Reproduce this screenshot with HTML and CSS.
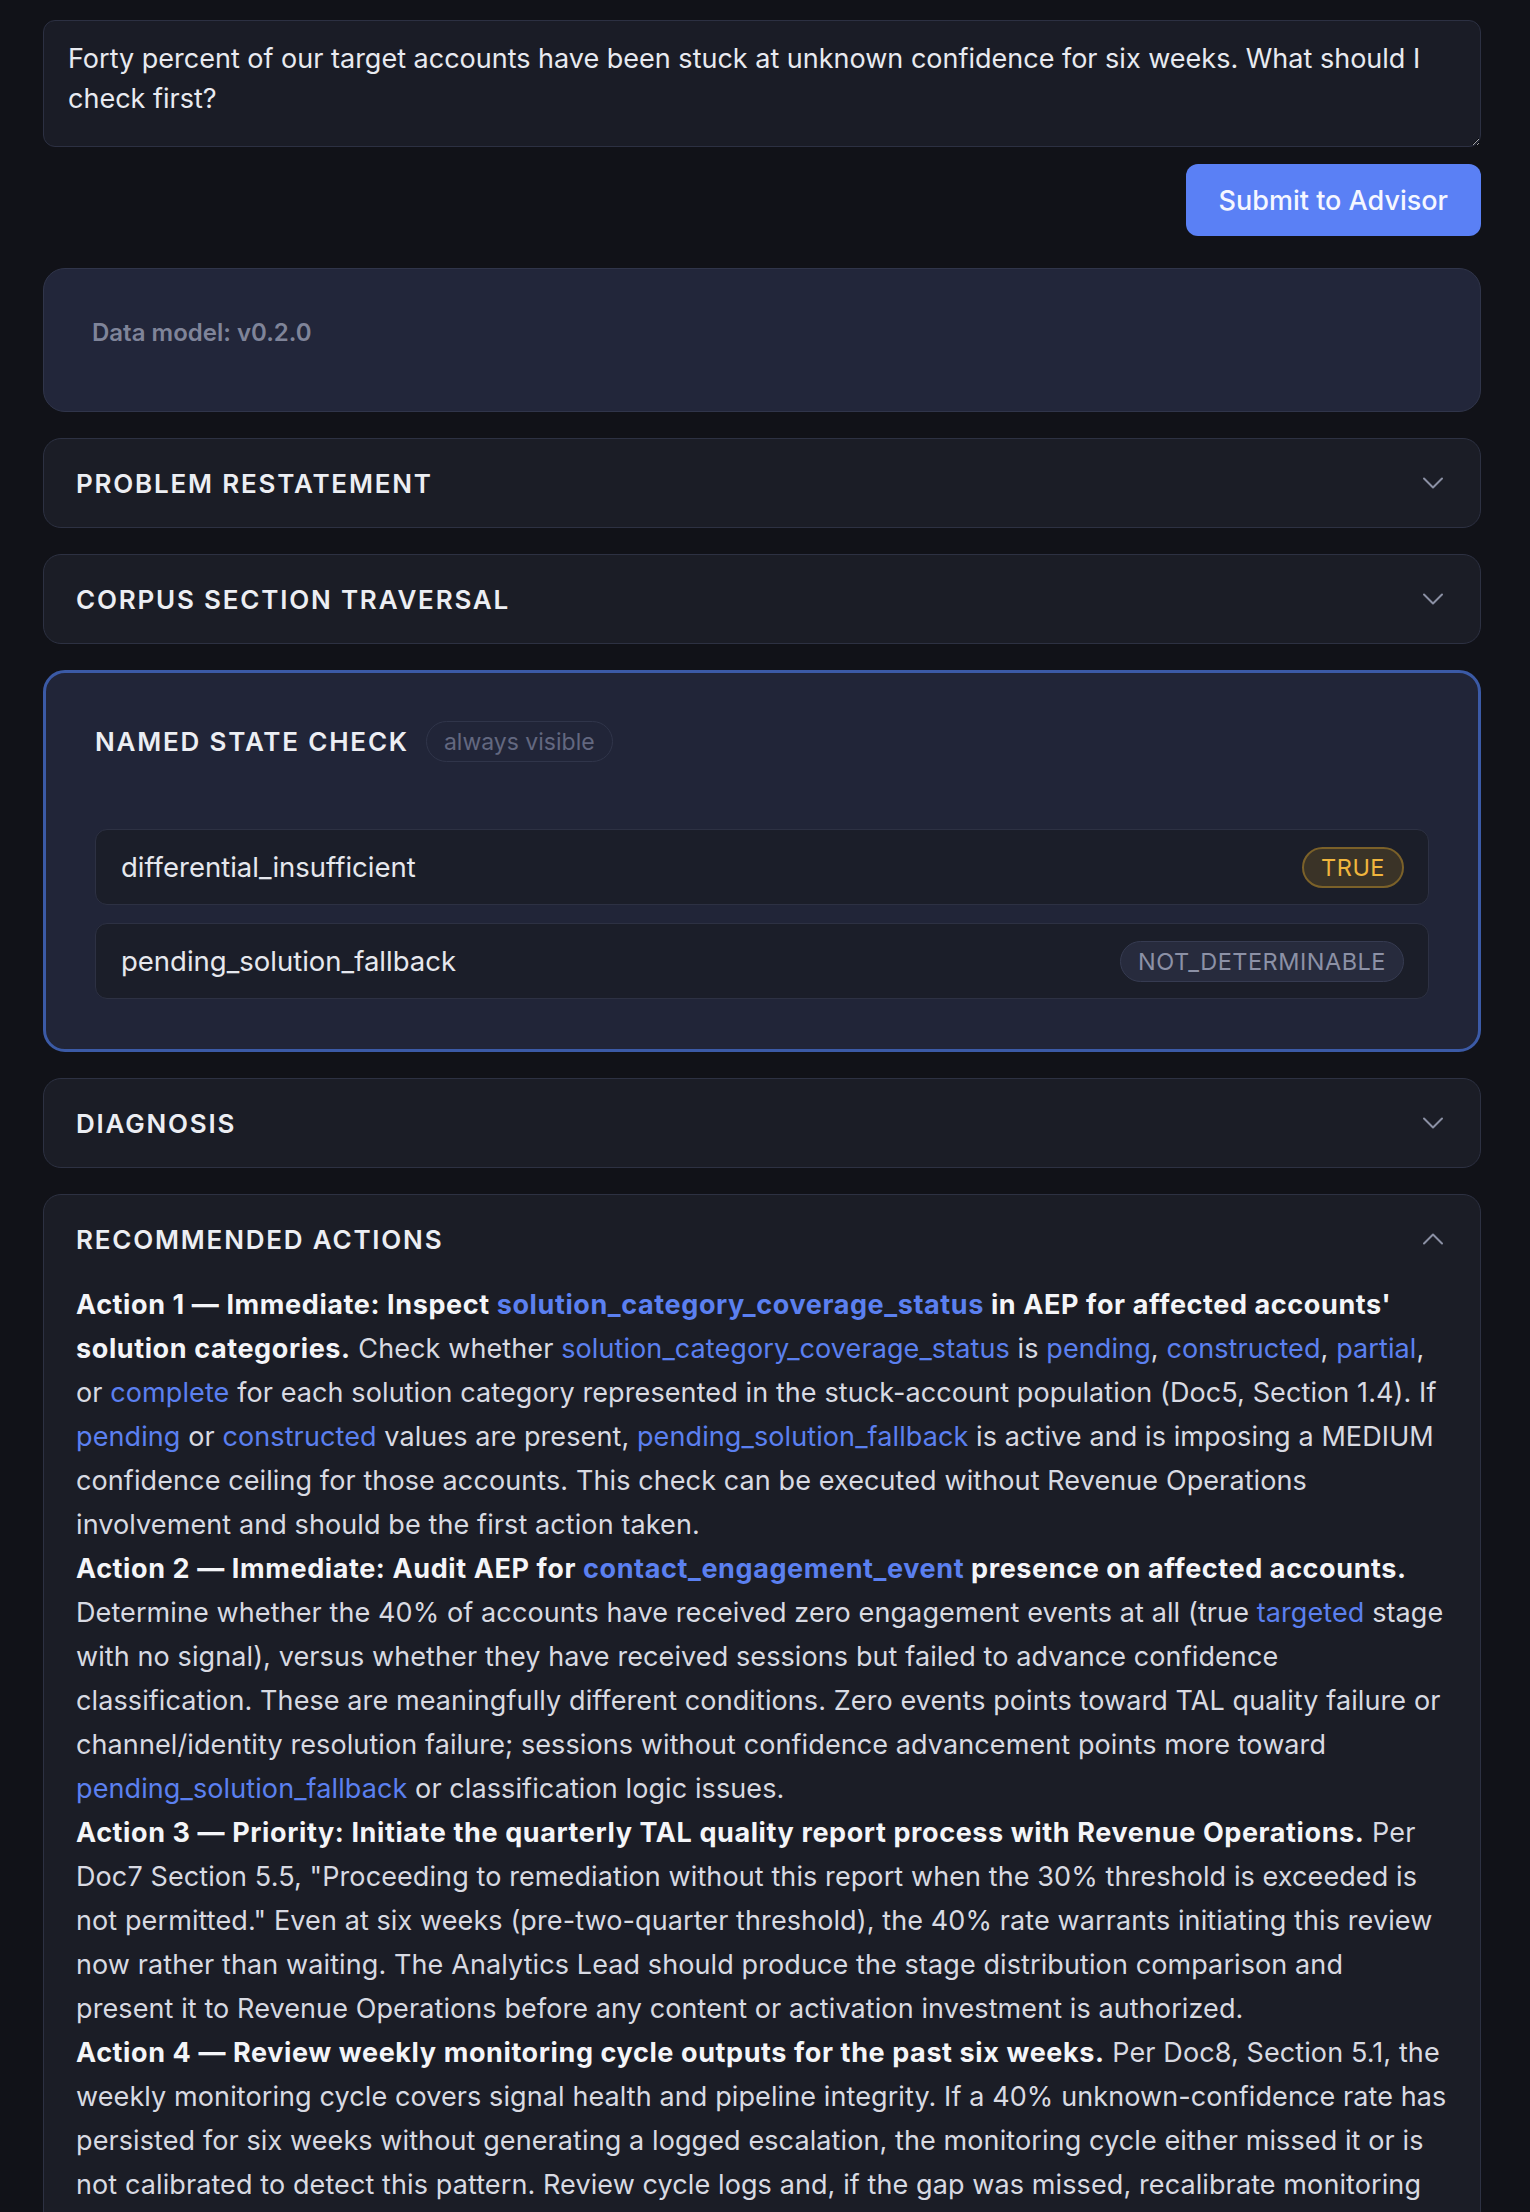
FILE: index.html
```html
<!DOCTYPE html>
<html lang="en">
<head>
  <meta charset="UTF-8">
  <title>Advisor</title>
  <link rel="stylesheet" href="styles.css">
</head>
<body>

<div class="page">
  <textarea class="question">Forty percent of our target accounts have been stuck at unknown confidence for six weeks. What should I check first?</textarea>
  <div class="submit-row">
    <button class="submit">Submit to Advisor</button>
  </div>

  <div class="results">
    <div class="meta-card">
      <div class="meta">Data model: v0.2.0</div>
    </div>

    <div class="section">
      <div class="section-head">
        <span class="section-title">Problem Restatement</span>
        <svg class="chev" width="24" height="24" viewBox="0 0 24 24"><path d="M3 7.5L12 16.5L21 7.5"/></svg>
      </div>
    </div>

    <div class="section">
      <div class="section-head">
        <span class="section-title">Corpus Section Traversal</span>
        <svg class="chev" width="24" height="24" viewBox="0 0 24 24"><path d="M3 7.5L12 16.5L21 7.5"/></svg>
      </div>
    </div>

    <div class="state-card">
      <div class="state-head">
        <span class="section-title">Named State Check</span>
        <span class="pill">always visible</span>
      </div>
      <div class="state-list">
        <div class="state-row">
          <span>differential_insufficient</span>
          <span class="flag flag-true">TRUE</span>
        </div>
        <div class="state-row">
          <span>pending_solution_fallback</span>
          <span class="flag flag-na">NOT_DETERMINABLE</span>
        </div>
      </div>
    </div>

    <div class="section">
      <div class="section-head">
        <span class="section-title">Diagnosis</span>
        <svg class="chev" width="24" height="24" viewBox="0 0 24 24"><path d="M3 7.5L12 16.5L21 7.5"/></svg>
      </div>
    </div>

    <div class="section">
      <div class="section-head">
        <span class="section-title">Recommended Actions</span>
        <svg class="chev" width="24" height="24" viewBox="0 0 24 24"><path d="M3 16.5L12 7.5L21 16.5"/></svg>
      </div>
      <div class="section-body">
        <p><strong>Action 1 — Immediate: Inspect <span class="ref">solution_category_coverage_status</span> in AEP for affected accounts' solution categories.</strong> Check whether <span class="ref">solution_category_coverage_status</span> is <span class="ref">pending</span>, <span class="ref">constructed</span>, <span class="ref">partial</span>, or <span class="ref">complete</span> for each solution category represented in the stuck-account population (Doc5, Section 1.4). If <span class="ref">pending</span> or <span class="ref">constructed</span> values are present, <span class="ref">pending_solution_fallback</span> is active and is imposing a MEDIUM confidence ceiling for those accounts. This check can be executed without Revenue Operations involvement and should be the first action taken.</p>
        <p><strong>Action 2 — Immediate: Audit AEP for <span class="ref">contact_engagement_event</span> presence on affected accounts.</strong> Determine whether the 40% of accounts have received zero engagement events at all (true <span class="ref">targeted</span> stage with no signal), versus whether they have received sessions but failed to advance confidence classification. These are meaningfully different conditions. Zero events points toward TAL quality failure or channel/identity resolution failure; sessions without confidence advancement points more toward <span class="ref">pending_solution_fallback</span> or classification logic issues.</p>
        <p><strong>Action 3 — Priority: Initiate the quarterly TAL quality report process with Revenue Operations.</strong> Per Doc7 Section 5.5, "Proceeding to remediation without this report when the 30% threshold is exceeded is not permitted." Even at six weeks (pre-two-quarter threshold), the 40% rate warrants initiating this review now rather than waiting. The Analytics Lead should produce the stage distribution comparison and present it to Revenue Operations before any content or activation investment is authorized.</p>
        <p><strong>Action 4 — Review weekly monitoring cycle outputs for the past six weeks.</strong> Per Doc8, Section 5.1, the weekly monitoring cycle covers signal health and pipeline integrity. If a 40% unknown-confidence rate has persisted for six weeks without generating a logged escalation, the monitoring cycle either missed it or is not calibrated to detect this pattern. Review cycle logs and, if the gap was missed, recalibrate monitoring thresholds before the next cycle.</p>
      </div>
    </div>
  </div>
</div>

</body>
</html>
```

FILE: styles.css
```css
body {
  margin: 0;
  background: #111218;
  font-family: Inter, "Noto Sans", sans-serif;
  color: #e4e6ec;
}
.page {
  padding: 20px 49px 40px 43px;
}
.question {
  display: block;
  width: 100%;
  height: 127px;
  box-sizing: border-box;
  padding: 18px 24px;
  background: #1a1c26;
  border: 1.5px solid #2c3042;
  border-radius: 12px;
  color: #e8eaf0;
  font-family: Inter, "Noto Sans", sans-serif;
  font-size: 27px;
  line-height: 40px;
  resize: vertical;
  outline: none;
}
.submit-row {
  display: flex;
  justify-content: flex-end;
  margin-top: 17px;
}
.submit {
  height: 72px;
  padding: 0 33px;
  background: #5a80f5;
  color: #f5f7ff;
  border: none;
  border-radius: 12px;
  font-family: Inter, "Noto Sans", sans-serif;
  font-size: 27px;
  font-weight: 500;
  cursor: pointer;
}
.results {
  display: flex;
  flex-direction: column;
  gap: 26px;
  margin-top: 32px;
}
.meta-card {
  background: #22263a;
  border: 1.5px solid #30354a;
  border-radius: 22px;
  padding: 48px 48px 62px;
}
.meta {
  font-size: 24px;
  font-weight: 600;
  line-height: 32px;
  color: #7f8499;
}
.section {
  background: #1b1d26;
  border: 1.5px solid #2d3142;
  border-radius: 18px;
}
.section-head {
  height: 88px;
  display: flex;
  align-items: center;
  justify-content: space-between;
  padding: 0 35px 0 32px;
}
.section-title {
  font-size: 26px;
  font-weight: 600;
  letter-spacing: 1.8px;
  text-transform: uppercase;
  color: #eceef3;
}
.chev {
  fill: none;
  stroke: #8b90a4;
  stroke-width: 2;
  stroke-linecap: round;
  stroke-linejoin: round;
}
.section-body {
  padding: 0 33px 30px 32px;
  font-size: 27px;
  line-height: 44px;
  letter-spacing: 0.1px;
  color: #d8dae2;
}
.section-body p {
  margin: 0;
}
.section-body strong {
  font-weight: 700;
  letter-spacing: 0.6px;
  color: #f4f5f8;
}
.ref {
  color: #5b80f0;
}
.state-card {
  background: #212538;
  border: 3px solid #3b5aa6;
  border-radius: 22px;
  padding: 48px 49px 50px;
}
.state-head {
  display: flex;
  align-items: center;
  gap: 17px;
  margin-bottom: 67px;
}
.pill {
  height: 41px;
  box-sizing: border-box;
  display: flex;
  align-items: center;
  padding: 0 17px;
  border: 1.5px solid #30354a;
  border-radius: 21px;
  font-size: 23px;
  color: #636880;
}
.state-list {
  display: flex;
  flex-direction: column;
  gap: 18px;
}
.state-row {
  height: 76px;
  box-sizing: border-box;
  display: flex;
  align-items: center;
  justify-content: space-between;
  padding: 0 24px 0 25px;
  background: #1b1e29;
  border: 1.5px solid #2d3143;
  border-radius: 12px;
  font-size: 27.5px;
  color: #e6e8ee;
}
.flag {
  height: 41px;
  box-sizing: border-box;
  display: flex;
  align-items: center;
  padding: 0 17px;
  border-radius: 21px;
  font-size: 23.5px;
  letter-spacing: 0.5px;
}
.flag-true {
  background: #3a3327;
  border: 2px solid #7b6129;
  color: #f0b53d;
}
.flag-na {
  background: #272b3d;
  border: 1.5px solid #363b51;
  color: #8c91a6;
}
```
